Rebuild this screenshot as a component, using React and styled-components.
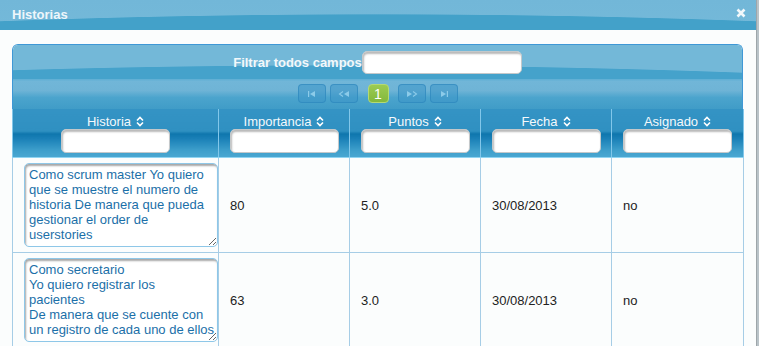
import React from "react";
import styled, { createGlobalStyle } from "styled-components";

const GlobalStyle = createGlobalStyle`
  html, body {
    margin: 0;
    padding: 0;
    background: #b9c3c8;
    font-family: "Liberation Sans", Arial, sans-serif;
    font-size: 13px;
    overflow: hidden;
  }
`;

const Dialog = styled.div`
  width: 756px;
  height: 346px;
  background: #fbfdfd;
  border-right: 1px solid #9ea6aa;
  overflow: hidden;
`;

const TitleBar = styled.div`
  height: 30px;
  display: flex;
  align-items: center;
  justify-content: space-between;
  padding: 0 10px 0 12px;
  background:
    radial-gradient(1400px 186px at 50% 200px, #43a1c9 99.6%, transparent 100%),
    linear-gradient(#72b7d8, #74b9d9);
`;

const Title = styled.span`
  color: #eef6fb;
  font-weight: bold;
  font-size: 13px;
  margin-top: -2px;
`;

const Close = styled.span`
  display: flex;
  margin-top: -4px;
`;

const Content = styled.div`
  padding: 14px 13px 0 12px;
`;

const Grid = styled.div`
  width: 731px;
`;

const Top = styled.div`
  border: 1px solid #3f98d6;
  border-bottom: none;
  border-radius: 6px 6px 0 0;
  overflow: hidden;
`;

const FilterRow = styled.div`
  height: 34px;
  display: flex;
  align-items: center;
  justify-content: center;
  background:
    radial-gradient(1500px 200px at 45% 220px, #45a2cb 99.6%, transparent 100%),
    #73b8d8;
`;

const FilterLabel = styled.span`
  color: #f2f8fb;
  font-weight: bold;
  font-size: 13px;
`;

const TextInput = styled.input`
  display: block;
  box-sizing: border-box;
  width: ${(p) => p.$w}px;
  height: ${(p) => p.$h}px;
  border: 1px solid #c4c8ca;
  border-radius: 5px;
  background: #fff;
  box-shadow: inset 1px 2px 2px rgba(0, 0, 0, 0.28);
  padding: 0 4px;
  margin: ${(p) => (p.$centered ? "0 auto" : "0")};
  outline: none;
`;

const PagerRow = styled.div`
  height: 30px;
  display: flex;
  align-items: center;
  justify-content: center;
  gap: 4px;
  background: linear-gradient(#5eaed4 0%, #71b6d8 8%, #6fb4d6 38%, #4ba4cd 62%, #409cc7 100%);
`;

const PageButton = styled.span`
  box-sizing: border-box;
  width: ${(p) => (p.$active ? 21 : 28)}px;
  height: 19px;
  margin: ${(p) => (p.$active ? "0 5px 1px 6px" : "0 0 1px 0")};
  border-radius: 4px;
  display: flex;
  align-items: center;
  justify-content: center;
  border: 1px solid ${(p) => (p.$active ? "#b4da72" : "rgba(40, 130, 185, 0.55)")};
  background: ${(p) =>
    p.$active ? "linear-gradient(#9ccb52, #83b83c)" : "rgba(60, 150, 200, 0.55)"};
  color: #fff;
  font-size: 14px;
`;

const Table = styled.table`
  width: 731px;
  border-collapse: collapse;
  table-layout: fixed;
`;

const HeadCell = styled.th`
  padding: 5px 0 4px;
  border: 1px solid #82c7ea;
  border-top: none;
  border-bottom: 1px solid #8fd4f2;
  background: linear-gradient(#3493c4 0%, #2f90c1 46%, #0f76ad 52%, #1a80b7 62%, #3c9dca 85%, #4aa7d1 100%);
  color: #f4f9fc;
  font-weight: normal;
  font-size: 13px;
  vertical-align: top;
`;

const HeadLabel = styled.div`
  display: flex;
  align-items: center;
  justify-content: center;
  gap: 5px;
  height: 15px;
`;

const BodyCell = styled.td`
  padding: 5px 11px;
  border: 1px solid #a6cde6;
  color: #222;
  font-size: 13px;
  vertical-align: middle;
`;

const Story = styled.textarea`
  display: block;
  box-sizing: border-box;
  width: 194px;
  height: 84px;
  margin: 0;
  padding: 3px 2px 2px 4px;
  border: 1px solid #8ec7e8;
  border-radius: 5px;
  box-shadow: inset 1px 2px 2px rgba(0, 0, 0, 0.35);
  background: #fff;
  color: #1b6fa8;
  font-family: "Liberation Sans", Arial, sans-serif;
  font-size: 13px;
  line-height: 15px;
  white-space: pre;
  overflow: hidden;
  outline: none;
`;

const SortIcon = () => (
  <svg width="8" height="11" viewBox="0 0 8 11">
    <path d="M1 4.5 L4 1.5 L7 4.5 M1 6.5 L4 9.5 L7 6.5" fill="none" stroke="#fff" strokeWidth="1.6" />
  </svg>
);

const CloseIcon = () => (
  <svg width="10" height="10" viewBox="0 0 10 10">
    <path d="M1.5 1.5 L8.5 8.5 M8.5 1.5 L1.5 8.5" stroke="#f2f8fb" strokeWidth="2.6" />
  </svg>
);

const PagerIcon = ({ kind }) => {
  const c = "#8ccbe9";
  return (
    <svg width="12" height="6" viewBox="0 0 12 6">
      {kind === "first" && (
        <>
          <rect x="2" y="0" width="1.2" height="6" fill={c} />
          <path d="M9 0 L4 3 L9 6 Z" fill={c} />
        </>
      )}
      {kind === "prev" && (
        <>
          <path d="M5 0.5 L1.5 3 L5 5.5" fill="none" stroke={c} strokeWidth="1.1" />
          <path d="M11 0 L6 3 L11 6 Z" fill={c} />
        </>
      )}
      {kind === "next" && (
        <>
          <path d="M1 0 L6 3 L1 6 Z" fill={c} />
          <path d="M7 0.5 L10.5 3 L7 5.5" fill="none" stroke={c} strokeWidth="1.1" />
        </>
      )}
      {kind === "last" && (
        <>
          <path d="M3 0 L8 3 L3 6 Z" fill={c} />
          <rect x="8.8" y="0" width="1.2" height="6" fill={c} />
        </>
      )}
    </svg>
  );
};

const columns = [
  { name: "Historia", width: 206 },
  { name: "Importancia", width: 131 },
  { name: "Puntos", width: 131 },
  { name: "Fecha", width: 131 },
  { name: "Asignado", width: 132 },
];

const rows = [
  {
    story: "Como scrum master Yo quiero\nque se muestre el numero de\nhistoria De manera que pueda\ngestionar el order de\nuserstories",
    importance: "80",
    points: "5.0",
    date: "30/08/2013",
    assigned: "no",
  },
  {
    story: "Como secretario\nYo quiero registrar los\npacientes\nDe manera que se cuente con\nun registro de cada uno de ellos",
    importance: "63",
    points: "3.0",
    date: "30/08/2013",
    assigned: "no",
  },
];

const App = () => {
  return (
    <>
      <GlobalStyle />
      <Dialog>
        <TitleBar>
          <Title>Historias</Title>
          <Close>
            <CloseIcon />
          </Close>
        </TitleBar>
        <Content>
          <Grid>
            <Top>
              <FilterRow>
                <FilterLabel>Filtrar todos campos</FilterLabel>
                <TextInput $w={160} $h={23} />
              </FilterRow>
              <PagerRow>
                <PageButton>
                  <PagerIcon kind="first" />
                </PageButton>
                <PageButton>
                  <PagerIcon kind="prev" />
                </PageButton>
                <PageButton $active>1</PageButton>
                <PageButton>
                  <PagerIcon kind="next" />
                </PageButton>
                <PageButton>
                  <PagerIcon kind="last" />
                </PageButton>
              </PagerRow>
            </Top>
            <Table>
              <colgroup>
                {columns.map((col) => (
                  <col key={col.name} style={{ width: col.width }} />
                ))}
              </colgroup>
              <thead>
                <tr>
                  {columns.map((col) => (
                    <HeadCell key={col.name}>
                      <HeadLabel>
                        {col.name}
                        <SortIcon />
                      </HeadLabel>
                      <TextInput $w={109} $h={24} $centered />
                    </HeadCell>
                  ))}
                </tr>
              </thead>
              <tbody>
                {rows.map((row, i) => (
                  <tr key={i}>
                    <BodyCell>
                      <Story defaultValue={row.story} />
                    </BodyCell>
                    <BodyCell>{row.importance}</BodyCell>
                    <BodyCell>{row.points}</BodyCell>
                    <BodyCell>{row.date}</BodyCell>
                    <BodyCell>{row.assigned}</BodyCell>
                  </tr>
                ))}
              </tbody>
            </Table>
          </Grid>
        </Content>
      </Dialog>
    </>
  );
};

export default App;
